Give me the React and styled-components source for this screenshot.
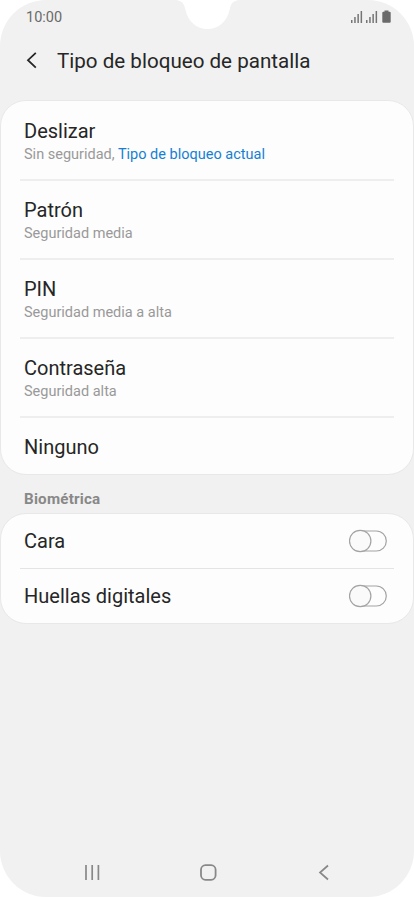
import React from 'react';
import styled, { createGlobalStyle } from 'styled-components';

const GlobalStyle = createGlobalStyle`
  * {
    box-sizing: border-box;
  }

  body {
    background: #fff;
    margin: 0;
  }
`;

const Screen = styled.div`
  background: #f1f1f1;
  border-radius: 46px;
  display: flex;
  flex-direction: column;
  font-family: Roboto, sans-serif;
  height: 897px;
  overflow: hidden;
  position: relative;
  width: 414px;
`;

const Notch = styled.svg`
  left: 174px;
  position: absolute;
  top: 0;
`;

const StatusBar = styled.div`
  align-items: center;
  color: #6a6a6a;
  display: flex;
  font-size: 14.5px;
  height: 33px;
  justify-content: space-between;
  line-height: 33px;
  padding: 0 23px 0 26px;
`;

const Time = styled.span`
  padding-top: 1px;
`;

const Header = styled.header`
  align-items: center;
  display: flex;
  height: 56px;
  margin-bottom: 11px;
  padding-left: 26px;
`;

const Title = styled.h1`
  color: #262626;
  font-size: 20.6px;
  font-weight: 400;
  line-height: 24px;
  margin: 0 0 0 19px;
`;

const Card = styled.ul`
  background: #fdfdfd;
  border: 1px solid #e8e8e8;
  border-radius: 26px;
  list-style: none;
  margin: 0;
  padding: 0 19px;
`;

const Row = styled.li`
  align-items: center;
  display: flex;
  height: ${({ $height }) => $height}px;
  justify-content: space-between;
  padding: ${({ $top }) => $top || 0}px 7px 0 4px;

  &:not(:last-of-type) {
    border-bottom: ${({ $line }) => $line || 2}px solid ${({ $line }) => ($line ? '#e4e4e4' : '#eee')};
  }
`;

const Name = styled.div`
  color: #262626;
  font-size: 20px;
  line-height: 24px;
  padding-top: ${({ $top }) => $top || 0}px;
`;

const Detail = styled.div`
  color: #999;
  font-size: 14.5px;
  line-height: 20px;
  padding-top: 2px;
`;

const Current = styled.span`
  color: #1580d3;
`;

const SectionTitle = styled.h2`
  color: #888;
  font-size: 15.2px;
  font-weight: 700;
  height: 38px;
  letter-spacing: 0.2px;
  line-height: 48px;
  margin: 0;
  padding-left: 24px;
`;

const NavBar = styled.nav`
  display: flex;
  height: 50px;
  justify-content: space-between;
  margin-top: auto;
  padding: 17px 84px 0;
`;

const SignalIcon = () => (
  <svg width="12" height="13" viewBox="0 0 12 13" fill="#757575">
    <path d="M0 10h1.5v3H0zM3.2 7h1.5v6H3.2zM6.4 4h1.5v9H6.4zM9.6 1h1.5v12H9.6z" />
  </svg>
);

const StatusIcons = styled.div`
  align-items: center;
  display: flex;
  gap: 3px;

  svg:last-child {
    margin-left: 1px;
  }
`;

const Switch = () => (
  <svg width="38" height="24" viewBox="0 0 38 24" fill="#fdfdfd" stroke="#a3a3a3" strokeWidth="1.2">
    <rect x="1" y="2" width="36.3" height="20" rx="10" />
    <circle cx="11.2" cy="12" r="10.7" fill="#fafafa" />
  </svg>
);

const lockTypes = [
  { name: 'Deslizar', detail: 'Sin seguridad, ', current: 'Tipo de bloqueo actual' },
  { name: 'Patrón', detail: 'Seguridad media' },
  { name: 'PIN', detail: 'Seguridad media a alta' },
  { name: 'Contraseña', detail: 'Seguridad alta' },
];

const App = () => (
  <>
    <GlobalStyle />
    <Screen>
      <Notch width="68" height="30" viewBox="0 0 68 30" fill="#fff">
        <path d="M2 0C9 1 10 4 11.500 10C14 22 23 29 33.500 29C44 29 53 22 55.500 10C57 4 58 1 65 0Z" />
      </Notch>
      <StatusBar>
        <Time>10:00</Time>
        <StatusIcons>
          <SignalIcon />
          <SignalIcon />
          <svg width="9" height="13" viewBox="0 0 9 13" fill="#6a6a6a">
            <path d="M2.500 0.500h4v1.300h1.200q1 0 1 1v9q0 1-1 1h-6.400q-1 0-1-1v-9q0-1 1-1h1.200z" />
          </svg>
        </StatusIcons>
      </StatusBar>
      <Header>
        <svg width="12" height="18" viewBox="0 0 12 18" fill="none" stroke="#262626" strokeWidth="1.8">
          <path d="M9.800 0.800L2 8.200L9.800 15.600" />
        </svg>
        <Title>Tipo de bloqueo de pantalla</Title>
      </Header>
      <Card>
        {lockTypes.map(({ name, detail, current }, i) => (
          <Row key={name} $height={i === 0 ? 80 : 79} $top={i === 0 ? 1 : 0}>
            <div>
              <Name $top={2}>{name}</Name>
              <Detail>
                {detail}
                {current && <Current>{current}</Current>}
              </Detail>
            </div>
          </Row>
        ))}
        <Row $height={56}>
          <Name $top={1}>Ninguno</Name>
        </Row>
      </Card>
      <SectionTitle>Biométrica</SectionTitle>
      <Card>
        <Row $height={55} $line={1}>
          <Name>Cara</Name>
          <Switch />
        </Row>
        <Row $height={54}>
          <Name>Huellas digitales</Name>
          <Switch />
        </Row>
      </Card>
      <NavBar>
        <svg width="16" height="17" viewBox="0 0 16 17" fill="none" stroke="#888" strokeWidth="1.7">
          <path d="M2 1v15M8.200 1v15M14.400 1v15" />
        </svg>
        <svg width="18" height="17" viewBox="0 0 18 17" fill="none" stroke="#888" strokeWidth="1.8">
          <rect x="1" y="1.200" width="14.600" height="14.600" rx="4.500" />
        </svg>
        <svg width="12" height="17" viewBox="0 0 12 17" fill="none" stroke="#888" strokeWidth="1.7">
          <path d="M10 1.500L2 8.500L10 15.500" />
        </svg>
      </NavBar>
    </Screen>
  </>
);

export default App;
